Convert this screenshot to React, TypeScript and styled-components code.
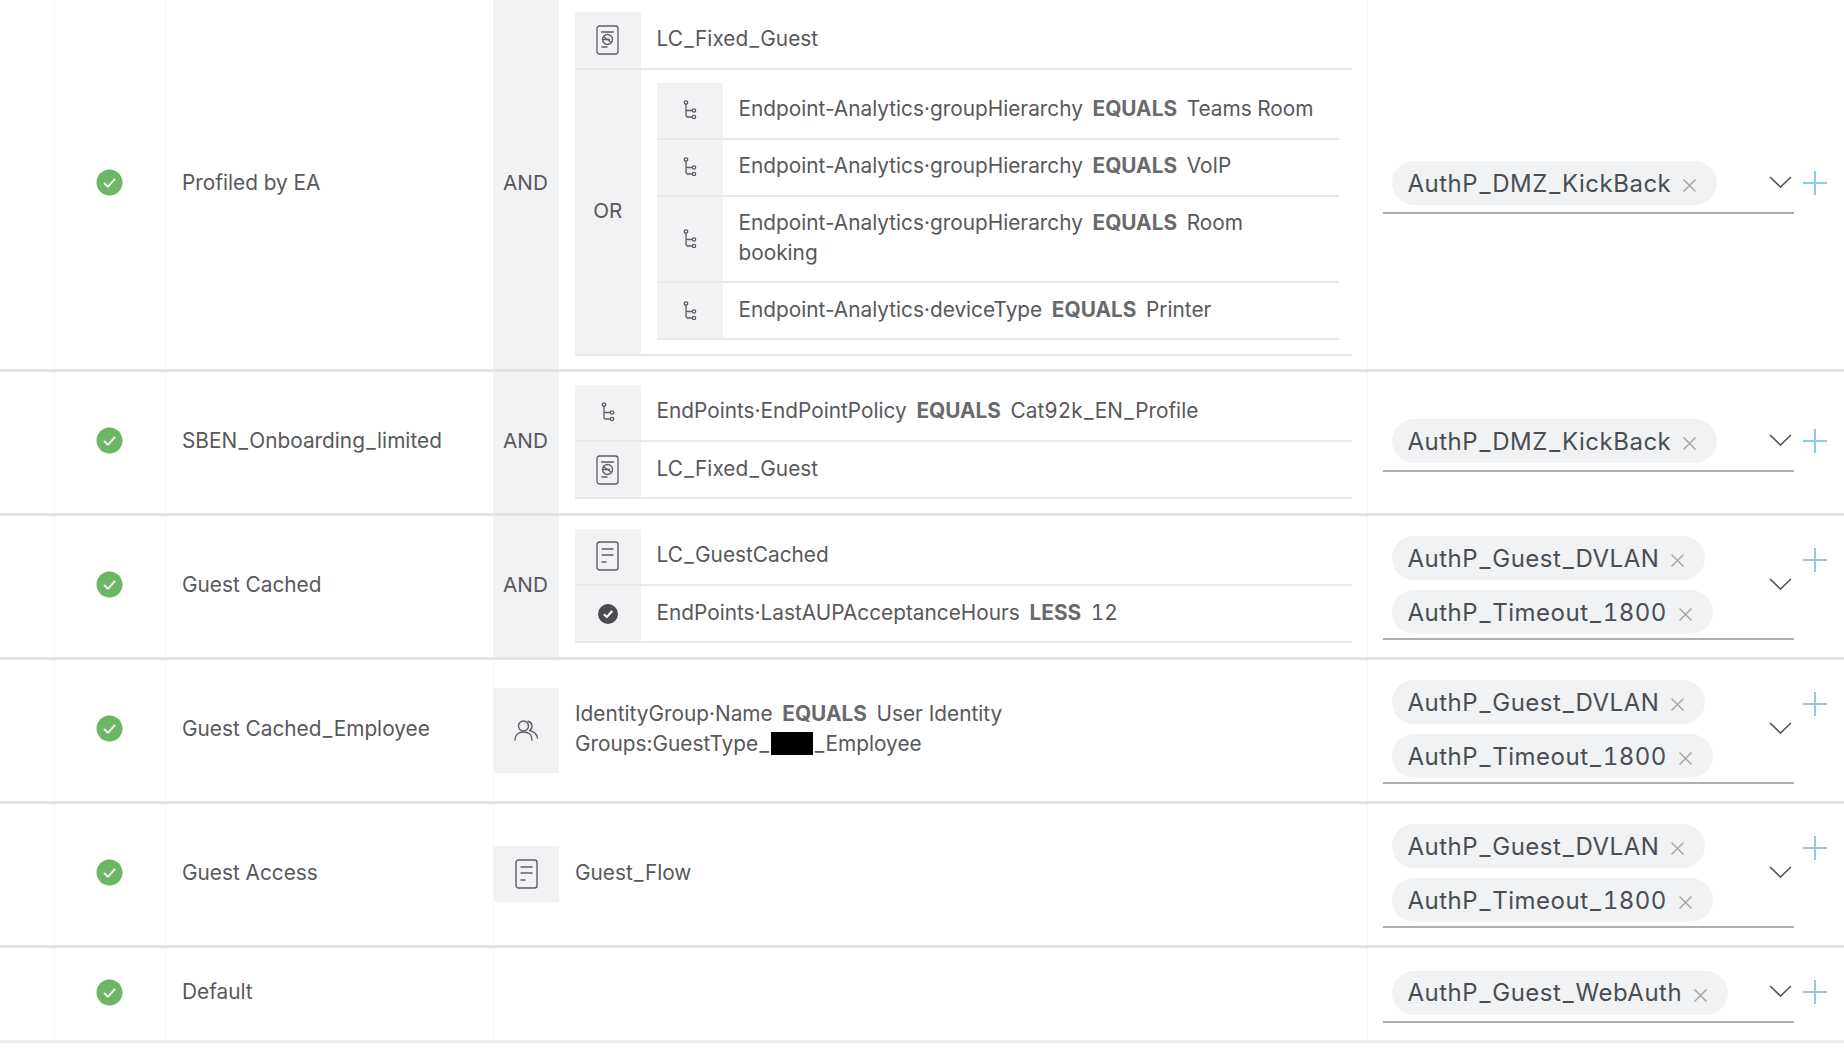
import React from 'react';
import styled, { createGlobalStyle } from 'styled-components';

const GlobalStyle = createGlobalStyle`
  html, body {
    margin: 0;
    padding: 0;
    background: #fff;
  }
  body {
    font-family: Inter, "Liberation Sans", sans-serif;
    color: #58585b;
    overflow: hidden;
  }
`;

const Table = styled.div`
  width: 1844px;
  height: 1049px;
`;

const Row = styled.div<{ $height: number; $light?: boolean }>`
  display: grid;
  grid-template-columns: 54px 111px 327.5px 66px 808px 1fr;
  box-sizing: border-box;
  height: ${p => p.$height}px;
  border-bottom: 3px solid ${p => (p.$light ? '#eeeeee' : '#e2e3e4')};
`;

const Cell = styled.div`
  display: flex;
  align-items: center;
  min-width: 0;
  border-left: 1px solid #f6f6f6;
`;

const Gutter = styled.div``;

const StatusCell = styled(Cell)`
  justify-content: center;
  padding: 0 1px 3px 0;
`;

const NameCell = styled(Cell)`
  padding: 0 0 4px 16px;
  font-size: 20.8px;
  line-height: 29px;
`;

const LogicCell = styled.div`
  display: flex;
  align-items: center;
  justify-content: center;
  background: #f1f2f4;
  font-size: 20.7px;
  padding-bottom: 3px;
`;

const ConditionCell = styled.div`
  display: flex;
  flex-direction: column;
  justify-content: center;
  padding: 0 14.5px 0 16.5px;
`;

const WideCondition = styled(Cell)`
  grid-column: span 2;
`;

const IconCell = styled.div`
  flex: 0 0 65.5px;
  display: flex;
  align-items: center;
  justify-content: center;
  background: #f1f2f4;
  align-self: stretch;
`;

const ConditionRow = styled.div<{ $tall?: boolean }>`
  display: flex;
  box-sizing: border-box;
  min-height: ${p => (p.$tall ? 86 : 57.2)}px;
  border-bottom: 2px solid #e7e8ea;
`;

const SoloCondition = styled.div<{ $tall?: boolean }>`
  display: flex;
  flex: 1;
  min-height: ${p => (p.$tall ? 85 : 55.5)}px;
`;

const ConditionText = styled.div`
  display: flex;
  align-items: center;
  padding: 0 0 2.5px 16px;
  font-size: 20.8px;
  line-height: 29.4px;
`;

const TextBlock = styled.div``;

const Operator = styled.b`
  font-weight: 700;
  color: #6a6a6d;
  margin: 0 3.8px;
`;

const Value = styled.span`
  font-variant-numeric: tabular-nums;
`;

const Underscore = styled.span`
  margin: 0 1.35px;
`;

const Redacted = styled.span`
  display: inline-block;
  width: 42px;
  height: 22.5px;
  margin: 0 0 0 1px;
  background: #000;
  vertical-align: -4px;
`;

const OrBlock = styled.div`
  display: flex;
  border-bottom: 2px solid #e7e8ea;
`;

const OrLabel = styled(IconCell)`
  font-size: 20.7px;
  padding-bottom: 3px;
`;

const NestedList = styled.div`
  flex: 1;
  display: flex;
  flex-direction: column;
  padding: 13px 13px 14px 16.5px;
`;

const ResultCell = styled(Cell)`
  padding-left: 15.5px;
  gap: 9.5px;
  align-items: center;
`;

const SelectField = styled.div`
  flex: 0 0 410.5px;
  box-sizing: border-box;
  min-height: 59px;
  display: flex;
  align-items: center;
  justify-content: space-between;
  padding: 4px 2px 4px 8.5px;
  border-bottom: 2px solid #aeaeae;
`;

const ChipStack = styled.div`
  display: flex;
  flex-direction: column;
  align-items: flex-start;
  gap: 10px;
`;

const Chip = styled.div`
  display: flex;
  align-items: center;
  height: 44px;
  padding: 0 20px 0 16px;
  border-radius: 22px;
  background: #f1f2f4;
  color: #4a4d52;
  font-size: 24px;
  letter-spacing: 0.5px;
  font-variant-numeric: tabular-nums;
  white-space: pre;
`;

const ChipClose = styled.svg`
  width: 15px;
  height: 15px;
  margin: 5px 0 0 11px;
  stroke: #a8a8a8;
  stroke-width: 1.5;
  fill: none;
`;

const Chevron = styled.svg`
  width: 23px;
  height: 12px;
  margin-bottom: 3px;
  stroke: #5a5a5a;
  stroke-width: 1.7;
  fill: none;
`;

const PlusColumn = styled.div`
  align-self: center;
  display: flex;
  flex-direction: column;
`;

const Plus = styled.svg<{ $double?: boolean }>`
  width: 24px;
  height: 24px;
  stroke: #8ccbef;
  stroke-width: 2;
  margin-bottom: ${p => (p.$double ? 52 : 3)}px;
`;

const IconSvg = styled.svg`
  display: block;
  fill: none;
  stroke: #5e5e62;
  stroke-linecap: round;
  stroke-linejoin: round;
`;

// the original face has a much wider underscore than Inter
const Label = ({ text }: { text: string }) => (
  <>
    {text.split('_').map((part, i) => (
      <React.Fragment key={i}>
        {i > 0 && <Underscore>_</Underscore>}
        {part}
      </React.Fragment>
    ))}
  </>
);

const StatusOk = () => (
  <svg width="27" height="27" viewBox="0 0 27 27">
    <circle cx="13.5" cy="13.5" r="13" fill="#6db665" />
    <path d="M8 14l4 3.8 7-8" fill="none" stroke="#fff" strokeWidth="1.8" />
  </svg>
);

const DocIcon = () => (
  <IconSvg width="23" height="30" viewBox="0 0 23 30" strokeWidth="1.4">
    <rect x="1" y="1" width="21" height="28" rx="2.5" />
    <path d="M6 8h11M6 14h11M6 21h4" />
  </IconSvg>
);

const FixedDocIcon = () => (
  <IconSvg width="23" height="30" viewBox="0 0 23 30" strokeWidth="1.3">
    <rect x="1" y="1" width="21" height="28" rx="2.5" />
    <path d="M5.5 7h12" />
    <circle cx="11.5" cy="14.5" r="5" />
    <path d="M7.5 11.5l8 6M6.5 14.5h7M6 22h5" />
  </IconSvg>
);

const HierarchyIcon = () => (
  <IconSvg width="14" height="20" viewBox="0 0 14 20" strokeWidth="1.3">
    <circle cx="3" cy="2.5" r="1.7" />
    <circle cx="11" cy="10.5" r="1.7" />
    <circle cx="11" cy="17" r="1.7" />
    <path d="M3 4.2V15a2 2 0 0 0 2 2h4.3M3 10.5h6.3" />
  </IconSvg>
);

const GroupIcon = () => (
  <IconSvg width="25" height="21" viewBox="0 0 25 21" strokeWidth="1.4">
    <circle cx="9.5" cy="6" r="5" />
    <path d="M1 20c0-5 3.5-8 8.5-8s8.5 3 8.5 8" />
    <path d="M14 1.3a5 5 0 0 1 1.5 9.2c4 1 7.5 4 8 7.5" />
  </IconSvg>
);

const CheckedIcon = () => (
  <svg width="20" height="20" viewBox="0 0 20 20">
    <circle cx="10" cy="10" r="10" fill="#4b4b50" />
    <path d="M5.8 10.2l3 2.8 5.4-6" fill="none" stroke="#fff" strokeWidth="2.2" />
  </svg>
);

const Tags = ({ names }: { names: string[] }) => (
  <SelectField>
    <ChipStack>
      {names.map(name => (
        <Chip key={name}>
          <Label text={name} />
          <ChipClose viewBox="0 0 15 15">
            <path d="M1.5 1.5l12 12M13.5 1.5l-12 12" />
          </ChipClose>
        </Chip>
      ))}
    </ChipStack>
    <Chevron viewBox="0 0 23 12">
      <path d="M1 1l10.5 10L22 1" />
    </Chevron>
  </SelectField>
);

const Result = ({ names }: { names: string[] }) => (
  <ResultCell>
    <Tags names={names} />
    <PlusColumn>
      <Plus $double={names.length > 1} viewBox="0 0 24 24">
        <path d="M12 0v24M0 12h24" />
      </Plus>
    </PlusColumn>
  </ResultCell>
);

const Expr = ({ attr, op, value }: { attr: string; op: string; value: string }) => (
  <ConditionText>
    <TextBlock>
      {attr} <Operator>{op}</Operator> <Value><Label text={value} /></Value>
    </TextBlock>
  </ConditionText>
);

const Lead = ({ name }: { name: string }) => (
  <>
    <Gutter />
    <StatusCell>
      <StatusOk />
    </StatusCell>
    <NameCell>
      <TextBlock>
        <Label text={name} />
      </TextBlock>
    </NameCell>
  </>
);

const dvlanTimeout = ['AuthP_Guest_DVLAN', 'AuthP_Timeout_1800'];

export default function App() {
  return (
    <Table>
      <GlobalStyle />

      <Row $height={371.5}>
        <Lead name="Profiled by EA" />
        <LogicCell>AND</LogicCell>
        <ConditionCell>
          <ConditionRow>
            <IconCell><FixedDocIcon /></IconCell>
            <ConditionText><TextBlock><Label text="LC_Fixed_Guest" /></TextBlock></ConditionText>
          </ConditionRow>
          <OrBlock>
            <OrLabel>OR</OrLabel>
            <NestedList>
              <ConditionRow>
                <IconCell><HierarchyIcon /></IconCell>
                <Expr attr="Endpoint-Analytics·groupHierarchy" op="EQUALS" value="Teams Room" />
              </ConditionRow>
              <ConditionRow>
                <IconCell><HierarchyIcon /></IconCell>
                <Expr attr="Endpoint-Analytics·groupHierarchy" op="EQUALS" value="VoIP" />
              </ConditionRow>
              <ConditionRow $tall>
                <IconCell><HierarchyIcon /></IconCell>
                <ConditionText>
                  <TextBlock>
                    Endpoint-Analytics·groupHierarchy <Operator>EQUALS</Operator> Room
                    <br />
                    booking
                  </TextBlock>
                </ConditionText>
              </ConditionRow>
              <ConditionRow>
                <IconCell><HierarchyIcon /></IconCell>
                <Expr attr="Endpoint-Analytics·deviceType" op="EQUALS" value="Printer" />
              </ConditionRow>
            </NestedList>
          </OrBlock>
        </ConditionCell>
        <Result names={['AuthP_DMZ_KickBack']} />
      </Row>

      <Row $height={144}>
        <Lead name="SBEN_Onboarding_limited" />
        <LogicCell>AND</LogicCell>
        <ConditionCell>
          <ConditionRow>
            <IconCell><HierarchyIcon /></IconCell>
            <Expr attr="EndPoints·EndPointPolicy" op="EQUALS" value="Cat92k_EN_Profile" />
          </ConditionRow>
          <ConditionRow>
            <IconCell><FixedDocIcon /></IconCell>
            <ConditionText><TextBlock><Label text="LC_Fixed_Guest" /></TextBlock></ConditionText>
          </ConditionRow>
        </ConditionCell>
        <Result names={['AuthP_DMZ_KickBack']} />
      </Row>

      <Row $height={144}>
        <Lead name="Guest Cached" />
        <LogicCell>AND</LogicCell>
        <ConditionCell>
          <ConditionRow>
            <IconCell><DocIcon /></IconCell>
            <ConditionText><TextBlock><Label text="LC_GuestCached" /></TextBlock></ConditionText>
          </ConditionRow>
          <ConditionRow>
            <IconCell><CheckedIcon /></IconCell>
            <Expr attr="EndPoints·LastAUPAcceptanceHours" op="LESS" value="12" />
          </ConditionRow>
        </ConditionCell>
        <Result names={dvlanTimeout} />
      </Row>

      <Row $height={144}>
        <Lead name="Guest Cached_Employee" />
        <WideCondition>
          <SoloCondition $tall>
            <IconCell><GroupIcon /></IconCell>
            <ConditionText>
              <TextBlock>
                IdentityGroup·Name <Operator>EQUALS</Operator> User Identity
                <br />
                Groups:GuestType<Underscore>_</Underscore><Redacted /><Underscore>_</Underscore>Employee
              </TextBlock>
            </ConditionText>
          </SoloCondition>
        </WideCondition>
        <Result names={dvlanTimeout} />
      </Row>

      <Row $height={144}>
        <Lead name="Guest Access" />
        <WideCondition>
          <SoloCondition>
            <IconCell><DocIcon /></IconCell>
            <ConditionText><TextBlock><Label text="Guest_Flow" /></TextBlock></ConditionText>
          </SoloCondition>
        </WideCondition>
        <Result names={dvlanTimeout} />
      </Row>

      <Row $height={95} $light>
        <Lead name="Default" />
        <WideCondition />
        <Result names={['AuthP_Guest_WebAuth']} />
      </Row>
    </Table>
  );
}
